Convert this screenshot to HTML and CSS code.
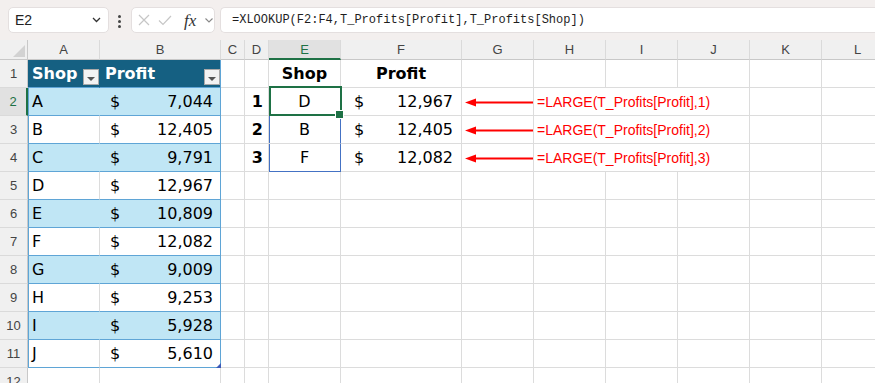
FILE: index.html
```html
<!DOCTYPE html>
<html lang="en">

<head>
    <meta charset="UTF-8">
    <title>Top 3 Shops - XLOOKUP</title>
    <link rel="stylesheet" href="styles.css">
</head>

<body>
    <div class="toolbar">
        <div class="namebox">
            <span>E2</span>
            <svg width="9" height="6" viewBox="0 0 9 6"><path d="M1 1l3.5 3.5L8 1" fill="none" stroke="#333" stroke-width="1.3"/></svg>
        </div>
        <div class="grip"><i></i><i></i><i></i></div>
        <div class="fxbox">
            <svg class="cancel" width="12" height="12" viewBox="0 0 12 12"><path d="M1 1l10 10M11 1L1 11" stroke="#c6c6c6" stroke-width="1.2"/></svg>
            <svg class="enter" width="14" height="11" viewBox="0 0 14 11"><path d="M1 5.5l4 4L13 1" fill="none" stroke="#c6c6c6" stroke-width="1.2"/></svg>
            <span class="fx">fx</span>
            <svg class="more" width="8" height="5" viewBox="0 0 8 5"><path d="M0.5 0.5L4 4l3.5-3.5" fill="none" stroke="#888" stroke-width="1.1"/></svg>
        </div>
        <div class="formula">=XLOOKUP(F2:F4,T_Profits[Profit],T_Profits[Shop])</div>
    </div>

    <div class="sheet">
        <!-- column headers -->
        <div class="corner"></div>
        <div class="ch">A</div>
        <div class="ch">B</div>
        <div class="ch">C</div>
        <div class="ch">D</div>
        <div class="ch sel">E</div>
        <div class="ch">F</div>
        <div class="ch">G</div>
        <div class="ch">H</div>
        <div class="ch">I</div>
        <div class="ch">J</div>
        <div class="ch">K</div>
        <div class="ch">L</div>

        <!-- row 1 -->
        <div class="rh">1</div>
        <div class="c th">Shop<span class="filter"></span></div>
        <div class="c th th-b">Profit<span class="filter"></span></div>
        <div class="c"></div>
        <div class="c"></div>
        <div class="c bold center">Shop</div>
        <div class="c bold center">Profit</div>
        <div class="c"></div><div class="c"></div><div class="c"></div><div class="c"></div><div class="c"></div><div class="c"></div>

        <!-- row 2 -->
        <div class="rh sel">2</div>
        <div class="c ta band">A</div>
        <div class="c tb band money"><span>$</span><span>7,044</span></div>
        <div class="c"></div>
        <div class="c bold rank">1</div>
        <div class="c pick active">D</div>
        <div class="c money money-f"><span>$</span><span>12,967</span></div>
        <div class="c arrow"><svg width="71" height="27" viewBox="0 0 71 27"><path d="M12 14.5H71" stroke="#f00" stroke-width="2"/><path d="M3 14.5l11-4v8z" fill="#f00"/></svg></div>
        <div class="c note">=LARGE(T_Profits[Profit],1)</div>
        <div class="c"></div><div class="c"></div>

        <!-- row 3 -->
        <div class="rh">3</div>
        <div class="c ta">B</div>
        <div class="c tb money"><span>$</span><span>12,405</span></div>
        <div class="c"></div>
        <div class="c bold rank">2</div>
        <div class="c pick">B</div>
        <div class="c money money-f"><span>$</span><span>12,405</span></div>
        <div class="c arrow"><svg width="71" height="27" viewBox="0 0 71 27"><path d="M12 14.5H71" stroke="#f00" stroke-width="2"/><path d="M3 14.5l11-4v8z" fill="#f00"/></svg></div>
        <div class="c note">=LARGE(T_Profits[Profit],2)</div>
        <div class="c"></div><div class="c"></div>

        <!-- row 4 -->
        <div class="rh">4</div>
        <div class="c ta band">C</div>
        <div class="c tb band money"><span>$</span><span>9,791</span></div>
        <div class="c"></div>
        <div class="c bold rank">3</div>
        <div class="c pick last">F</div>
        <div class="c money money-f"><span>$</span><span>12,082</span></div>
        <div class="c arrow"><svg width="71" height="27" viewBox="0 0 71 27"><path d="M12 14.5H71" stroke="#f00" stroke-width="2"/><path d="M3 14.5l11-4v8z" fill="#f00"/></svg></div>
        <div class="c note">=LARGE(T_Profits[Profit],3)</div>
        <div class="c"></div><div class="c"></div>

        <!-- rows 5 - 11 -->
        <div class="rh">5</div>
        <div class="c ta">D</div>
        <div class="c tb money"><span>$</span><span>12,967</span></div>
        <div class="c"></div><div class="c"></div><div class="c"></div><div class="c"></div><div class="c"></div>
        <div class="c"></div><div class="c"></div><div class="c"></div><div class="c"></div><div class="c"></div>

        <div class="rh">6</div>
        <div class="c ta band">E</div>
        <div class="c tb band money"><span>$</span><span>10,809</span></div>
        <div class="c"></div><div class="c"></div><div class="c"></div><div class="c"></div><div class="c"></div>
        <div class="c"></div><div class="c"></div><div class="c"></div><div class="c"></div><div class="c"></div>

        <div class="rh">7</div>
        <div class="c ta">F</div>
        <div class="c tb money"><span>$</span><span>12,082</span></div>
        <div class="c"></div><div class="c"></div><div class="c"></div><div class="c"></div><div class="c"></div>
        <div class="c"></div><div class="c"></div><div class="c"></div><div class="c"></div><div class="c"></div>

        <div class="rh">8</div>
        <div class="c ta band">G</div>
        <div class="c tb band money"><span>$</span><span>9,009</span></div>
        <div class="c"></div><div class="c"></div><div class="c"></div><div class="c"></div><div class="c"></div>
        <div class="c"></div><div class="c"></div><div class="c"></div><div class="c"></div><div class="c"></div>

        <div class="rh">9</div>
        <div class="c ta">H</div>
        <div class="c tb money"><span>$</span><span>9,253</span></div>
        <div class="c"></div><div class="c"></div><div class="c"></div><div class="c"></div><div class="c"></div>
        <div class="c"></div><div class="c"></div><div class="c"></div><div class="c"></div><div class="c"></div>

        <div class="rh">10</div>
        <div class="c ta band">I</div>
        <div class="c tb band money"><span>$</span><span>5,928</span></div>
        <div class="c"></div><div class="c"></div><div class="c"></div><div class="c"></div><div class="c"></div>
        <div class="c"></div><div class="c"></div><div class="c"></div><div class="c"></div><div class="c"></div>

        <div class="rh">11</div>
        <div class="c ta">J</div>
        <div class="c tb money corner-handle"><span>$</span><span>5,610</span></div>
        <div class="c"></div><div class="c"></div><div class="c"></div><div class="c"></div><div class="c"></div>
        <div class="c"></div><div class="c"></div><div class="c"></div><div class="c"></div><div class="c"></div>

        <!-- row 12 (cut off) -->
        <div class="rh">12</div>
        <div class="c"></div><div class="c"></div><div class="c"></div><div class="c"></div><div class="c"></div><div class="c"></div>
        <div class="c"></div><div class="c"></div><div class="c"></div><div class="c"></div><div class="c"></div><div class="c"></div>
    </div>
</body>

</html>
```

FILE: styles.css
```css
* {
    box-sizing: border-box;
}

body {
    margin: 0;
    width: 875px;
    height: 383px;
    overflow: hidden;
    background-color: #fff;
    font-family: "DejaVu Sans", sans-serif;
}

/* formula bar */
.toolbar {
    display: flex;
    align-items: flex-start;
    height: 40px;
    padding: 7px 0 0 8px;
    background-color: #f3efee;
}

.namebox {
    width: 101px;
    height: 26px;
    display: flex;
    align-items: center;
    justify-content: space-between;
    padding: 0 7px 0 6px;
    background-color: #fff;
    border: 1px solid #e4dfdf;
    border-radius: 5px;
    font: 14px "Liberation Sans", sans-serif;
    color: #222;
}

.grip {
    display: flex;
    flex-direction: column;
    gap: 2px;
    margin: 8px 0 0 9px;
}

.grip i {
    width: 3px;
    height: 3px;
    border-radius: 50%;
    background-color: #444;
}

.fxbox {
    width: 84px;
    height: 26px;
    margin-left: 10px;
    display: flex;
    align-items: center;
    padding-left: 6px;
    background-color: #fff;
    border: 1px solid #e4dfdf;
    border-radius: 5px;
}

.fxbox .enter {
    margin-left: 8px;
}

.fx {
    width: 15px;
    margin-left: 12px;
    font: italic 17px "Liberation Serif", serif;
    color: #333;
    line-height: 1;
}

.fxbox .more {
    margin-left: 6px;
}

.formula {
    flex: 1;
    height: 26px;
    margin-left: 5px;
    display: flex;
    align-items: center;
    padding-left: 11px;
    background-color: #fff;
    border: 1px solid #e4dfdf;
    border-right: none;
    border-radius: 5px 0 0 5px;
    font: 12px "Liberation Mono", monospace;
    color: #1e1e1e;
    white-space: nowrap;
}

/* grid */
.sheet {
    display: grid;
    grid-template-columns: 28px 72px 121px 24px 24px 72px 121px 72px 72px 72px 72px 72px 72px;
    grid-template-rows: 20px repeat(12, 28px);
    width: 894px;
}

.corner {
    position: relative;
    background-color: #f0f0f0;
    border-right: 1px solid #c8c8c8;
    border-bottom: 1px solid #c8c8c8;
}

.corner::after {
    content: "";
    position: absolute;
    right: 2px;
    bottom: 2px;
    border-left: 12px solid transparent;
    border-bottom: 12px solid #d2d2d2;
}

.ch, .rh {
    display: flex;
    align-items: center;
    justify-content: center;
    background-color: #f0f0f0;
    font: 13px "Liberation Sans", sans-serif;
    color: #444;
}

.ch {
    border-right: 1px solid #dadada;
    border-bottom: 1px solid #c8c8c8;
}

.ch.sel {
    background-color: #e1e1e1;
    color: #1e7145;
    border-bottom: 2px solid #1e7145;
}

.rh {
    border-right: 1px solid #c8c8c8;
    border-bottom: 1px solid #dadada;
}

.rh.sel {
    background-color: #e1e1e1;
    color: #1e7145;
    border-right: 2px solid #1e7145;
}

.c {
    display: flex;
    align-items: center;
    padding: 0 3px;
    border-right: 1px solid #dcdcdc;
    border-bottom: 1px solid #dcdcdc;
    font-size: 16px;
    color: #000;
    white-space: nowrap;
    min-width: 0;
}

.bold {
    font-weight: bold;
}

.center {
    justify-content: center;
}

/* T_Profits table */
.th {
    position: relative;
    padding-left: 4px;
    background-color: #156082;
    color: #fff;
    font-weight: bold;
    border-right-color: #156082;
    border-bottom-color: #5fa5d6;
    box-shadow: inset 1px 0 #156082;
}

.th-b {
    padding-left: 5px;
    border-right-color: #5fa5d6;
}

.filter {
    position: absolute;
    right: 0;
    bottom: 2px;
    width: 16px;
    height: 16px;
    background-color: #f3f3f3;
    border: 1px solid #a9a9a9;
}

.filter::after {
    content: "";
    position: absolute;
    left: 3px;
    top: 7px;
    border-left: 4px solid transparent;
    border-right: 4px solid transparent;
    border-top: 4px solid #555;
}

.ta {
    padding-left: 4px;
    border-bottom-color: #5fa5d6;
    box-shadow: inset 1px 0 #5fa5d6;
}

.tb {
    border-right-color: #5fa5d6;
    border-bottom-color: #5fa5d6;
}

.band {
    background-color: #c0e6f5;
}

.ta.band {
    border-right-color: #c0e6f5;
}

.money {
    justify-content: space-between;
    padding: 0 7px 0 10px;
}

.money-f {
    padding: 0 8px 0 13px;
}

.corner-handle {
    position: relative;
}

.corner-handle::after {
    content: "";
    position: absolute;
    right: -1px;
    bottom: -1px;
    border-left: 5px solid transparent;
    border-bottom: 5px solid #3d5ab8;
}

/* results */
.rank {
    justify-content: flex-end;
    padding-right: 5px;
}

.pick {
    justify-content: center;
    border-right-color: #4472c4;
    box-shadow: inset 1px 0 #4472c4;
}

.pick.last {
    border-bottom-color: #4472c4;
}

.active {
    position: relative;
}

.active::after {
    content: "";
    position: absolute;
    top: -2px;
    left: 0;
    right: -2px;
    bottom: -1px;
    border: 2px solid #1e7145;
}

.active::before {
    content: "";
    position: absolute;
    right: -4px;
    bottom: -4px;
    width: 7px;
    height: 7px;
    background-color: #1e7145;
    border: 1px solid #fff;
    z-index: 2;
}

.arrow {
    padding: 0;
}

.note {
    grid-column: span 3;
    padding-left: 3px;
    font: 14px "Liberation Sans", sans-serif;
    color: #f00;
}
```
